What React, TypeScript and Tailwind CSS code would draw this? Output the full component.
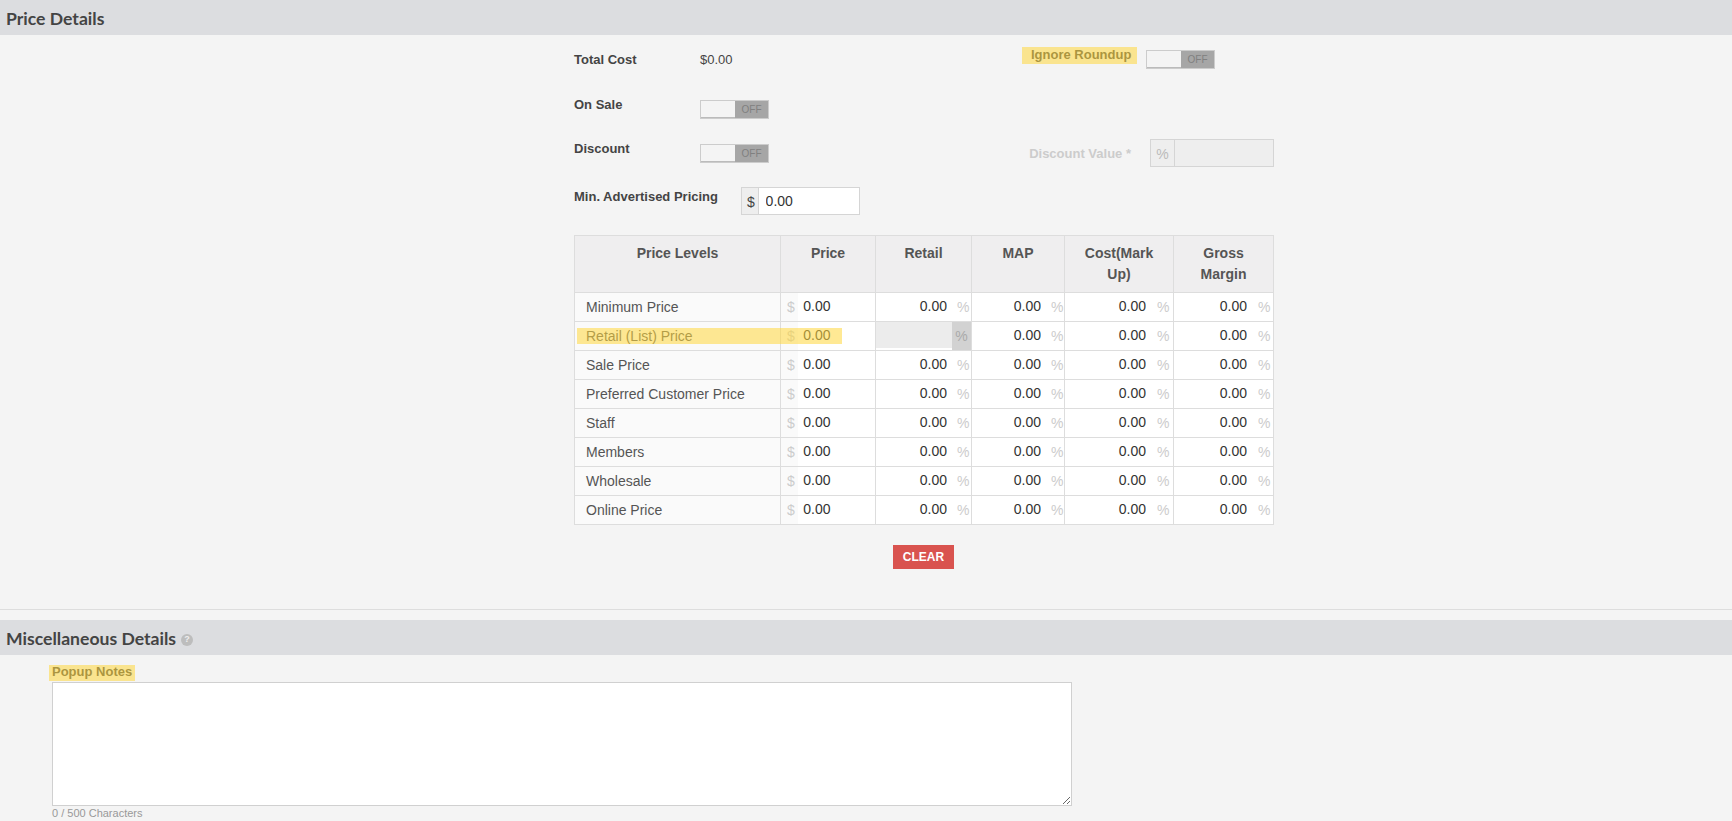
import React from 'react';

const levels = [
    'Minimum Price',
    'Retail (List) Price',
    'Sale Price',
    'Preferred Customer Price',
    'Staff',
    'Members',
    'Wholesale',
    'Online Price',
];

const Toggle = () => (
    <div className="flex h-[19px] w-[69px] border border-[#ccc] bg-[#f4f4f4]">
        <div className="w-[34px] border-b border-[#bbb]"></div>
        <div className="flex-1 bg-[#a6a6a6] text-center text-[10px] leading-[17px] text-[#808080]">OFF</div>
    </div>
);

const Highlight = ({ className }: { className: string }) => (
    <div className={`absolute bg-[#ffd73c]/55 pointer-events-none ${className}`}></div>
);

const SectionHeader = ({ title, help }: { title: string; help?: boolean }) => (
    <div className="flex h-[35px] items-center bg-[#dcdde0] pl-[6px] pt-[3px]">
        <h2 className="font-['Lato',sans-serif] text-[17.6px] font-bold text-[#444]">{title}</h2>
        {help && (
            <span className="ml-[5px] mt-[2px] flex h-[12px] w-[12px] items-center justify-center rounded-full bg-[#bdbdbd] text-[9px] font-bold text-[#eee]">
                ?
            </span>
        )}
    </div>
);

const PercentCell = ({ disabled, addon }: { disabled?: boolean; addon: string }) =>
    disabled ? (
        <td className="border border-[#ddd] bg-white p-0">
            <div className="flex h-[28px]">
                <div className="mb-[2px] flex-1 bg-[#ececec]"></div>
                <div className="w-[19px] bg-[#d2d2d2] text-center leading-[28px] text-[#aaa]">%</div>
            </div>
        </td>
    ) : (
        <td className="border border-[#ddd] bg-white p-0">
            <div className="flex h-[28px] items-center">
                <input
                    readOnly
                    defaultValue="0.00"
                    className="h-full min-w-0 flex-1 bg-white pr-[5px] pb-[2px] text-right text-[#333] outline-none"
                />
                <div className={`text-[#ccc] ${addon}`}>%</div>
            </div>
        </td>
    );

export default function App() {
    return (
        <div className="relative min-h-[821px] overflow-hidden bg-[#f4f4f4] font-['Liberation_Sans',sans-serif] text-[14px] text-[#444]">
            <SectionHeader title="Price Details" />

            {/* Price form */}
            <div className="ml-[574px] w-[700px]">
                <div className="relative h-[65px]">
                    <div className="flex pt-[15px]">
                        <span className="w-[126px] text-[13px] font-bold leading-[20px]">Total Cost</span>
                        <span className="text-[13px] leading-[20px]">$0.00</span>
                    </div>
                    <div className="absolute left-[448px] top-[11px] w-[115px] pl-[9px] text-[13px] font-bold leading-[17px]">
                        Ignore Roundup
                    </div>
                    <div className="absolute left-[572px] top-[15px]">
                        <Toggle />
                    </div>
                </div>

                <div className="flex h-[44px] items-start">
                    <span className="w-[126px] text-[13px] font-bold leading-[10px]">On Sale</span>
                    <Toggle />
                </div>

                <div className="flex h-[43px] items-start justify-between">
                    <div className="flex">
                        <span className="w-[126px] text-[13px] font-bold leading-[10px]">Discount</span>
                        <Toggle />
                    </div>
                    <div className="-mt-[5px] flex items-center">
                        <span className="mr-[19px] pt-[2px] text-[13px] font-bold text-[#ccc]">Discount Value *</span>
                        <div className="flex h-[28px] w-[124px] border border-[#d5d5d5] bg-[#eee]">
                            <div className="w-[24px] border-r border-[#d5d5d5] text-center leading-[28px] text-[#bbb]">%</div>
                        </div>
                    </div>
                </div>

                <div className="flex h-[48px] items-start">
                    <span className="w-[167px] text-[13px] font-bold leading-[20px]">Min. Advertised Pricing</span>
                    <div className="flex h-[28px] w-[119px] border border-[#d5d5d5] bg-white">
                        <div className="w-[19px] border-r border-[#d5d5d5] bg-[#eee] pl-[2px] text-center leading-[28px]">$</div>
                        <input readOnly defaultValue="0.00" className="w-full min-w-0 pl-[7px] pt-[1px] text-[#333] outline-none" />
                    </div>
                </div>

                {/* Price levels table */}
                <table className="w-[699px] table-fixed border-collapse">
                    <colgroup>
                        <col className="w-[206px]" />
                        <col className="w-[95px]" />
                        <col className="w-[96px]" />
                        <col className="w-[93px]" />
                        <col className="w-[109px]" />
                        <col className="w-[100px]" />
                    </colgroup>
                    <thead>
                        <tr className="h-[56px] bg-[#efeeef] text-[#555]">
                            {['Price Levels', 'Price', 'Retail', 'MAP', 'Cost(Mark Up)', 'Gross Margin'].map((h) => (
                                <th key={h} className="border border-[#ddd] px-[8px] pt-[7px] pb-[7px] align-top font-bold leading-[21px]">
                                    {h}
                                </th>
                            ))}
                        </tr>
                    </thead>
                    <tbody>
                        {levels.map((level, i) => (
                            <tr key={level} className="h-[29px]">
                                <td className="border border-[#ddd] bg-[#fafafa] pl-[11px] text-[#555]">{level}</td>
                                <td className="border border-[#ddd] bg-white p-0">
                                    <div className="flex h-[28px] items-center">
                                        <div className="h-full w-[20px] bg-[#fafafa] pl-[6px] leading-[28px] text-[#ccc]">$</div>
                                        <input readOnly defaultValue="0.00" className="h-full w-full min-w-0 bg-white pl-[5px] pb-[2px] text-[#333] outline-none" />
                                    </div>
                                </td>
                                <PercentCell disabled={i === 1} addon="w-[19px] pl-[5px]" />
                                <PercentCell addon="w-[18px] pl-[5px]" />
                                <PercentCell addon="w-[22px] pl-[6px]" />
                                <PercentCell addon="w-[21px] pl-[6px]" />
                            </tr>
                        ))}
                    </tbody>
                </table>

                <div className="ml-[319px] mt-[20px]">
                    <button className="h-[24px] w-[61px] bg-[#d9534f] text-[12px] font-bold text-white">CLEAR</button>
                </div>
            </div>

            <div className="mt-[40px] border-t border-[#ddd]"></div>

            <div className="mt-[10px]">
                <SectionHeader title="Miscellaneous Details" help />
            </div>

            {/* Popup notes */}
            <div className="pl-[52px]">
                <div className="mb-[2px] pt-[8px] text-[13px] font-bold leading-[17px]">Popup Notes</div>
                <textarea className="block h-[124px] w-[1020px] border border-[#d0d0d0] bg-white outline-none"></textarea>
                <div className="text-[11px] leading-[14px] text-[#999]">0 / 500 Characters</div>
            </div>

            {/* Highlighted fields */}
            <Highlight className="left-[1022px] top-[47px] h-[17px] w-[115px]" />
            <Highlight className="left-[577px] top-[328px] h-[16px] w-[265px]" />
            <Highlight className="left-[49px] top-[665px] h-[16px] w-[86px]" />
        </div>
    );
}
